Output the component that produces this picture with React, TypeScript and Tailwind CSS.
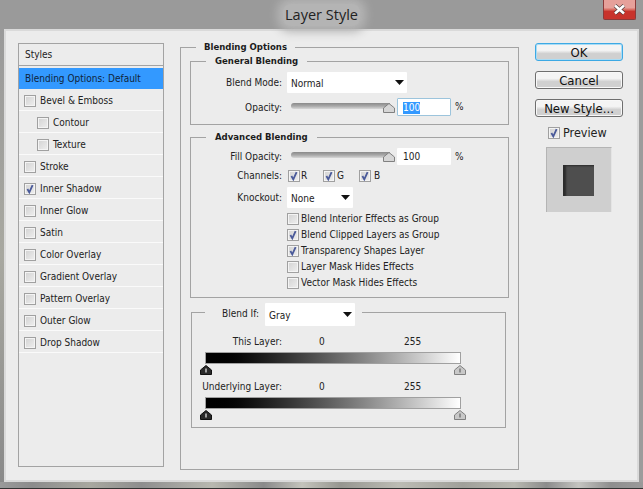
const font = "font-['DejaVu_Sans_Condensed','DejaVu_Sans',sans-serif] [font-stretch:condensed]";

const styleRows = [
  { label: "Bevel & Emboss", indent: false, checked: false },
  { label: "Contour", indent: true, checked: false },
  { label: "Texture", indent: true, checked: false },
  { label: "Stroke", indent: false, checked: false },
  { label: "Inner Shadow", indent: false, checked: true },
  { label: "Inner Glow", indent: false, checked: false },
  { label: "Satin", indent: false, checked: false },
  { label: "Color Overlay", indent: false, checked: false },
  { label: "Gradient Overlay", indent: false, checked: false },
  { label: "Pattern Overlay", indent: false, checked: false },
  { label: "Outer Glow", indent: false, checked: false },
  { label: "Drop Shadow", indent: false, checked: false },
];

const advancedChecks = [
  { label: "Blend Interior Effects as Group", checked: false },
  { label: "Blend Clipped Layers as Group", checked: true },
  { label: "Transparency Shapes Layer", checked: true },
  { label: "Layer Mask Hides Effects", checked: false },
  { label: "Vector Mask Hides Effects", checked: false },
];

const Check = ({ checked }: { checked?: boolean }) => (
  <span className="flex h-[12px] w-[12px] shrink-0 items-center justify-center border border-[#a0a0a0] bg-gradient-to-br from-[#d2d2d2] to-[#efefef] shadow-[inset_0_0_0_1px_#f4f4f4]">
    {checked && (
      <svg width="10" height="10" viewBox="0 0 10 10">
        <path d="M2.4 5 L4.3 8.4 L7.6 1.2" fill="none" stroke="#4a5a9a" strokeWidth="1.8" />
      </svg>
    )}
  </span>
);

const Arrow = () => (
  <svg width="9" height="5" viewBox="0 0 9 5" className="shrink-0">
    <path d="M0 0H9L4.5 5Z" fill="#111" />
  </svg>
);

const Select = ({ value, className }: { value: string; className: string }) => (
  <div className={`flex items-center justify-between rounded-[1px] bg-white pl-[4px] pr-[3px] text-[#222] ${className}`}>
    <span className="pt-[2px]">{value}</span>
    <Arrow />
  </div>
);

const Thumb = ({ dark, className }: { dark?: boolean; className: string }) => (
  <svg width="12" height="10" viewBox="0 0 12 10" className={`absolute -bottom-[12px] ${className}`}>
    <path d="M6 .5 11.5 5V9.5H.5V5Z" fill={dark ? "#2a2a2a" : "#c8c8c8"} stroke={dark ? "#111" : "#808080"} strokeLinejoin="round" />
    <path d="M6 3.5V7.5" stroke={dark ? "#eee" : "#666"} strokeWidth="1.2" />
  </svg>
);

const Slider = () => (
  <div className="relative -mt-[3px] h-[6px] w-[99px] rounded-l-[3px] bg-gradient-to-b from-[#8a8a8a] via-[#a8a8a8] to-[#d8d8d8]">
    <svg width="12" height="10" viewBox="0 0 12 10" className="absolute -right-[5px] top-0">
      <path d="M6 .5 11.5 5V9.5H.5V5Z" fill="#d6d6d6" stroke="#808080" strokeLinejoin="round" />
    </svg>
  </div>
);

const Group = ({ title, className, legend, children }: { title: string; className: string; legend: string; children: React.ReactNode }) => (
  <fieldset className={`border border-[#a3a3a3] ${className}`}>
    <legend className={`h-[11px] text-[9.5px] leading-[9px] font-bold text-[#1c1c1c] ${legend}`}>{title}</legend>
    {children}
  </fieldset>
);

const Ramp = ({ label, className }: { label: string; className: string }) => (
  <div className={className}>
    <div className="flex h-[14px] items-center">
      <span className="w-[90px] text-right">{label}</span>
      <span className="ml-[37px] w-[85px]">0</span>
      <span>255</span>
    </div>
    <div className="relative ml-[13px] mt-[3px] h-[12px] w-[256px] border border-[#a0a0a0] bg-gradient-to-r from-black to-white">
      <Thumb dark className="-left-[6px]" />
      <Thumb className="-right-[6px]" />
    </div>
  </div>
);

const Button = ({ label, focus }: { label: string; focus?: boolean }) => (
  <div className={`flex h-[18px] w-[88px] items-center justify-center rounded-[3px] border bg-gradient-to-b from-[#f4f4f4] from-40% to-[#d0d0d0] to-60% text-[13px] text-[#111] ${focus ? "border-[#3da9e4] shadow-[inset_0_0_0_1px_#a9dcf5]" : "border-[#6e6e6e] shadow-[inset_0_0_0_1px_#f8f8f8]"}`}>
    {label}
  </div>
);

export default function App() {
  return (
    <div className={`flex h-[489px] w-[643px] flex-col overflow-hidden border-b border-[#333] bg-[#9a9a9a] pt-[1px] text-[10px] leading-none text-[#222] ${font}`}>
      {/* title bar */}
      <div className="relative flex h-[28px] shrink-0 items-center justify-center">
        <span className="rounded-[8px] bg-[#b4b4b4] px-[2px] py-[1px] font-['Open_Sans',sans-serif] text-[14.5px] leading-[20px] [font-stretch:normal] text-[#222] shadow-[0_0_10px_6px_#b4b4b4]">Layer Style</span>
        <div className="absolute -top-[1px] right-[7px] flex h-[20px] w-[33px] items-center justify-center rounded-b-[2px] border border-t-0 border-[#8a3a3a] bg-gradient-to-b from-[#e6a09a] from-40% to-[#c8332c] to-60%">
          <svg width="13" height="11" viewBox="0 0 13 11">
            <path d="M2 1.5 11 9.5M11 1.5 2 9.5" stroke="#4a3a3a" strokeWidth="3.8" />
            <path d="M2 1.5 11 9.5M11 1.5 2 9.5" stroke="#fff" strokeWidth="2.6" />
          </svg>
        </div>
      </div>

      <div className="flex min-h-0 flex-1">
        <div className="w-[4px] shrink-0 bg-gradient-to-b from-[#9a9a9a] via-[#a8a8a0] to-[#8a8a8a]" />
        <div className="flex min-w-0 flex-1 border-2 border-[#dadada] bg-[#ececec] pl-[12px] pt-[12px]">
          {/* styles list */}
          <div className="flex h-[424px] w-[146px] shrink-0 flex-col border border-[#a3a3a3]">
            <div className="flex h-[22px] shrink-0 items-center border-b border-[#a3a3a3] pl-[6px]">Styles</div>
            <div className="mt-[2px] flex h-[21px] shrink-0 items-center bg-[#3399ff] pl-[6px] text-[#10243a]">Blending Options: Default</div>
            {styleRows.map((row) => (
              <div key={row.label} className={`flex h-[22px] shrink-0 items-center gap-[4px] border-b border-[#fafafa] pt-[2px] ${row.indent ? "pl-[18px]" : "pl-[5px]"}`}>
                <Check checked={row.checked} />
                <span>{row.label}</span>
              </div>
            ))}
          </div>

          {/* main options */}
          <Group title="Blending Options" legend="ml-[6px] px-[8px]" className="ml-[16px] -mt-[1px] h-[428px] w-[339px] shrink-0 px-[9px]">
            <Group title="General Blending" legend="ml-[15px] px-[9px]" className="mt-[3px] h-[69px] w-[319px]">
              <div className="mt-[5px] flex items-center">
                <span className="w-[91px] pt-[1px] text-right">Blend Mode:</span>
                <Select value="Normal" className="ml-[5px] h-[21px] w-[120px]" />
              </div>
              <div className="mt-[5px] flex items-center">
                <span className="w-[91px] pt-[2px] text-right">Opacity:</span>
                <div className="ml-[9px] flex items-center"><Slider /></div>
                <div className="ml-[7px] flex h-[18px] w-[54px] items-center rounded-[1px] border border-[#9cc4dc] bg-white pl-[5px] pt-[1px]">
                  <span className="bg-[#3399ff] py-[1px] text-white">100</span>
                </div>
                <span className="ml-[4px]">%</span>
              </div>
            </Group>

            <Group title="Advanced Blending" legend="ml-[15px] px-[9px]" className="mt-[7px] h-[166px] w-[319px]">
              <div className="mt-[5px] flex items-center">
                <span className="w-[91px] pt-[1px] text-right">Fill Opacity:</span>
                <div className="ml-[9px] flex items-center"><Slider /></div>
                <div className="ml-[7px] flex h-[17px] w-[54px] items-center rounded-[1px] bg-white pl-[6px] pt-[1px]">100</div>
                <span className="ml-[4px]">%</span>
              </div>
              <div className="mt-[5px] flex items-center">
                <span className="w-[91px] text-right">Channels:</span>
                <span className="ml-[6px]"><Check checked /></span>
                <span className="ml-[1px] w-[22px]">R</span>
                <Check checked />
                <span className="ml-[2px] w-[22px]">G</span>
                <Check checked />
                <span className="ml-[3px]">B</span>
              </div>
              <div className="mt-[5px] flex items-center">
                <span className="w-[91px] text-right">Knockout:</span>
                <Select value="None" className="ml-[5px] h-[21px] w-[66px]" />
              </div>
              <div className="ml-[96px] mt-[3px] flex flex-col">
                {advancedChecks.map((c) => (
                  <div key={c.label} className="flex h-[16px] items-center gap-[2px]">
                    <Check checked={c.checked} />
                    <span>{c.label}</span>
                  </div>
                ))}
              </div>
            </Group>

            <fieldset className="ml-[1px] mt-[5px] h-[125px] w-[315px] border border-[#a3a3a3]">
              <legend className="ml-[13px] flex h-[18px] items-start pl-[17px] pr-[7px]">
                <span className="mt-[6px] w-[38px] whitespace-nowrap">Blend If:</span>
                <Select value="Gray" className="ml-[5px] h-[23px] w-[90px] shrink-0" />
              </legend>
              <Ramp label="This Layer:" className="mt-[14px]" />
              <Ramp label="Underlying Layer:" className="mt-[16px]" />
            </fieldset>
          </Group>

          {/* buttons and preview */}
          <div className="ml-[16px] flex w-[88px] shrink-0 flex-col">
            <div className="flex flex-col gap-[10px]">
              <Button label="OK" focus />
              <Button label="Cancel" />
              <Button label="New Style..." />
            </div>
            <div className="ml-[13px] mt-[10px] flex items-center gap-[3px] text-[12.5px]">
              <Check checked />
              <span>Preview</span>
            </div>
            <div className="ml-[11px] mt-[7px] h-[65px] w-[66px] border border-b-0 border-[#b4b4b4] border-r-[#e4e4e4] bg-[#cfcfcf] pl-[16px] pt-[17px]">
              <div className="h-[31px] w-[31px] bg-[#4e4e4e] shadow-[inset_3px_1px_2px_#2c2c2c]" />
            </div>
          </div>
        </div>
        <div className="w-[4px] shrink-0 bg-[#9c9c9c]" />
      </div>

      <div className="h-[6px] shrink-0 bg-[linear-gradient(90deg,#9a9a9a_0%,#8c8c8c_5%,#a8a8a0_14%,#8e8e8e_22%,#b8b8b0_33%,#8a8a8a_41%,#c4c4bc_47%,#969690_53%,#bcbcb4_62%,#a0a09a_72%,#b8b8b0_80%,#8c8c8c_85%,#c4c4c0_90%,#8e8e8e_95%,#9a9a9a_100%)]" />
    </div>
  );
}
